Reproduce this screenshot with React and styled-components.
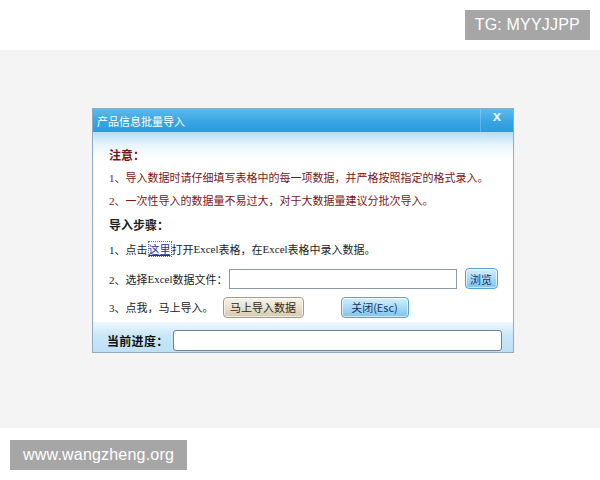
import React from "react";
import styled, { createGlobalStyle } from "styled-components";

const GlobalStyle = createGlobalStyle`
  body {
    margin: 0;
    background: #ffffff;
    font-family: "Liberation Sans", "Noto Sans CJK SC", sans-serif;
  }
`;

const Page = styled.div`
  width: 600px;
  height: 480px;
  display: flex;
  flex-direction: column;
  background: #ffffff;
`;

const TopBand = styled.div`
  height: 50px;
  display: flex;
  justify-content: flex-end;
  align-items: flex-start;
  padding: 10px 10px 0 0;
  box-sizing: border-box;
`;

const Badge = styled.div`
  height: 30px;
  padding: 0 ${(p) => p.$pad}px;
  background: #a6a6a6;
  color: #ffffff;
  font-family: "Liberation Sans", Arial, sans-serif;
  font-size: 16px;
  line-height: 30px;
  letter-spacing: 0.2px;
`;

const Stage = styled.div`
  height: 378px;
  background: #f4f4f4;
  padding: 58px 0 0 92px;
  box-sizing: border-box;
`;

const BottomBand = styled.div`
  height: 52px;
  padding: 12px 0 0 10px;
  box-sizing: border-box;
  display: flex;
  align-items: flex-start;
`;

const Dialog = styled.div`
  width: 422px;
  height: 245px;
  box-sizing: border-box;
  border: 1px solid #8eabc6;
  display: flex;
  flex-direction: column;
  background: #ffffff;
  font-family: "Liberation Serif", "Noto Sans CJK SC", serif;
  font-size: 11px;
`;

const TitleBar = styled.div`
  height: 23px;
  flex: none;
  display: flex;
  align-items: center;
  background: linear-gradient(#5cbaeb, #38a5e3 55%, #2b9cdf);
  color: #ffffff;
  font-family: "Noto Sans CJK SC", sans-serif;
  font-size: 11px;
  padding-left: 4px;
`;

const Title = styled.span`
  flex: 1;
`;

const CloseBox = styled.div`
  width: 32px;
  align-self: stretch;
  border-left: 1px solid rgba(255, 255, 255, 0.22);
  display: flex;
  justify-content: center;
  align-items: flex-start;
  font-family: "Liberation Sans", sans-serif;
  font-weight: bold;
  font-size: 15px;
  line-height: 14px;
  color: #e8f5ff;
`;

const Body = styled.div`
  flex: 1;
  display: flex;
  flex-direction: column;
  padding: 11px 0 0 16px;
  background: linear-gradient(#b3ddf4, #e6f4fc 12px, #ffffff 26px);
`;

const Row = styled.div`
  height: ${(p) => p.$h}px;
  flex: none;
  display: flex;
  align-items: center;
  color: ${(p) => (p.$note ? "#7a1616" : "#222222")};
  font-weight: ${(p) => (p.$bold ? "bold" : "normal")};
  font-family: ${(p) =>
    p.$bold ? '"Noto Sans CJK SC", sans-serif' : "inherit"};
  font-size: ${(p) => (p.$bold ? 12 : 11)}px;
  white-space: nowrap;
`;

const Link = styled.span`
  color: #1c2f9e;
  text-decoration: underline;
  outline: 1px dotted #5a6a9a;
  outline-offset: -1px;
  padding: 0 1px;
`;

const TextField = styled.div`
  width: ${(p) => p.$w}px;
  height: ${(p) => p.$hh}px;
  box-sizing: border-box;
  margin-left: ${(p) => p.$ml}px;
  background: #ffffff;
  border: 1px solid ${(p) => p.$border};
  border-radius: ${(p) => p.$r}px;
`;

const Button = styled.div`
  width: ${(p) => p.$w}px;
  height: ${(p) => p.$hh}px;
  margin-left: ${(p) => p.$ml}px;
  flex: none;
  box-sizing: border-box;
  display: flex;
  align-items: center;
  justify-content: center;
  border-radius: 4px;
  font-family: "Noto Sans CJK SC", sans-serif;
  font-size: 11px;
  border: 1px solid ${(p) => (p.$beige ? "#a39d8a" : "#5aa2d6")};
  background: ${(p) =>
    p.$beige
      ? "linear-gradient(#f7f4ec, #e7e1cf 50%, #d3caae)"
      : "linear-gradient(#d7effc, #a9daf6 50%, #7cc4ee)"};
  color: ${(p) => (p.$beige ? "#2b2a24" : "#17356b")};
  box-shadow: inset 0 0 0 1px rgba(255, 255, 255, 0.6);
`;

const Latin = styled.span`
  font-family: "Liberation Serif", serif;
`;

const ProgressBar = styled.div`
  height: 30px;
  flex: none;
  display: flex;
  align-items: center;
  padding: 6px 0 0 14px;
  box-sizing: border-box;
  background: linear-gradient(#eef7fd, #c9e7f7 45%, #bfe1f5);
`;

const ProgressLabel = styled.span`
  font-family: "Noto Sans CJK SC", sans-serif;
  font-weight: bold;
  color: #111111;
  font-size: 12px;
  letter-spacing: 0.3px;
`;

export default function App() {
  return (
    <Page>
      <GlobalStyle />
      <TopBand>
        <Badge $pad={10}>TG: MYYJJPP</Badge>
      </TopBand>
      <Stage>
        <Dialog>
          <TitleBar>
            <Title>产品信息批量导入</Title>
            <CloseBox>x</CloseBox>
          </TitleBar>
          <Body>
            <Row $h={22} $note $bold>
              注意：
            </Row>
            <Row $h={24} $note>
              1、导入数据时请仔细填写表格中的每一项数据，并严格按照指定的格式录入。
            </Row>
            <Row $h={22} $note>
              2、一次性导入的数据量不易过大，对于大数据量建议分批次导入。
            </Row>
            <Row $h={26} $bold>
              导入步骤：
            </Row>
            <Row $h={24}>
              1、点击<Link>这里</Link>打开<Latin>Excel</Latin>表格，在
              <Latin>Excel</Latin>表格中录入数据。
            </Row>
            <Row $h={35}>
              2、选择<Latin>Excel</Latin>数据文件：
              <TextField $w={228} $hh={20} $ml={1} $border="#8a9aaa" $r={0} />
              <Button $w={33} $hh={21} $ml={8}>
                浏览
              </Button>
            </Row>
            <Row $h={22}>
              3、点我，马上导入。
              <Button $beige $w={81} $hh={21} $ml={9}>
                马上导入数据
              </Button>
              <Button $w={68} $hh={21} $ml={37}>
                关闭(Esc)
              </Button>
            </Row>
          </Body>
          <ProgressBar>
            <ProgressLabel>当前进度：</ProgressLabel>
            <TextField $w={329} $hh={21} $ml={4} $border="#6f8193" $r={3} />
          </ProgressBar>
        </Dialog>
      </Stage>
      <BottomBand>
        <Badge $pad={13}>www.wangzheng.org</Badge>
      </BottomBand>
    </Page>
  );
}
